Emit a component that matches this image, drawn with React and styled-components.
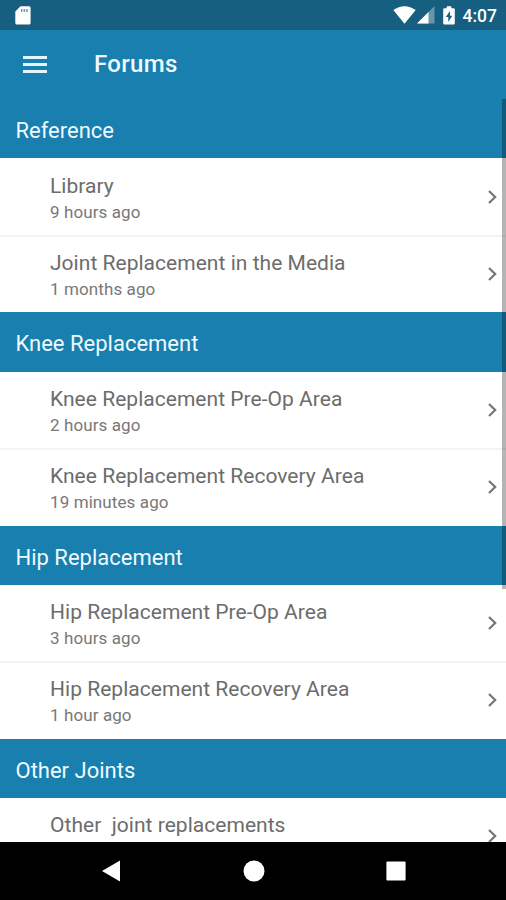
import React from 'react'
import styled, { createGlobalStyle } from 'styled-components'

const COLORS = {
  BLUE: '#187fae',
  DARK_BLUE: '#165f80',
  TITLE: '#6c6c6c',
  TIME: '#787878',
  LINE: '#f3f3f3',
}

const SECTIONS = [
  {
    name: 'Reference',
    forums: [
      { title: 'Library', time: '9 hours ago' },
      { title: 'Joint Replacement in the Media', time: '1 months ago' },
    ],
  },
  {
    name: 'Knee Replacement',
    forums: [
      { title: 'Knee Replacement Pre-Op Area', time: '2 hours ago' },
      { title: 'Knee Replacement Recovery Area', time: '19 minutes ago' },
    ],
  },
  {
    name: 'Hip Replacement',
    forums: [
      { title: 'Hip Replacement Pre-Op Area', time: '3 hours ago' },
      { title: 'Hip Replacement Recovery Area', time: '1 hour ago' },
    ],
  },
  {
    name: 'Other Joints',
    forums: [{ title: 'Other  joint replacements', time: '' }],
  },
]

const GlobalStyle = createGlobalStyle`
  body {
    margin: 0;
    background: black;
    font-family: Roboto, sans-serif;
  }
`

const Screen = styled.div`
  display: flex;
  flex-direction: column;
  width: 506px;
  height: 900px;
  overflow: hidden;
  background: white;
`

const StatusBar = styled.div`
  display: flex;
  flex: none;
  align-items: center;
  justify-content: space-between;
  box-sizing: border-box;
  height: 30px;
  padding: 0 9px 0 15px;
  background: ${COLORS.DARK_BLUE};
`

const StatusIcons = styled.div`
  display: flex;
  align-items: center;
`

const Clock = styled.span`
  margin-left: 8px;
  color: white;
  font-size: 17.5px;
  font-weight: 500;
  line-height: 30px;
  height: 28px;
`

const Toolbar = styled.div`
  display: flex;
  flex: none;
  align-items: center;
  gap: 47px;
  box-sizing: border-box;
  height: 69px;
  padding: 0 23px;
  background: ${COLORS.BLUE};
`

const MenuButton = styled.div`
  display: flex;
  flex-direction: column;
  gap: 4px;
  width: 24px;
`

const MenuLine = styled.div`
  height: 3px;
  background: #e3f5ff;
`

const PageTitle = styled.div`
  padding-bottom: 2px;
  color: #eefaff;
  font-size: 24px;
  font-weight: 500;
  letter-spacing: 0.35px;
`

const Content = styled.div`
  position: relative;
  flex: 1;
  min-height: 0;
  overflow: hidden;
`

const Scrollbar = styled.div`
  position: absolute;
  top: 0;
  right: 0;
  width: 4.5px;
  height: 490px;
  background: rgba(0, 0, 0, 0.29);
`

const SectionHeader = styled.div`
  box-sizing: border-box;
  height: 59.3px;
  padding-left: 15.5px;
  background: ${COLORS.BLUE};
  color: #eefaff;
  font-size: 22px;
  line-height: 63px;
`

const Row = styled.div`
  display: flex;
  align-items: center;
  justify-content: space-between;
  box-sizing: border-box;
  height: ${({ $last }) => ($last ? '75.5px' : '78.5px')};
  padding: 0 8px ${({ $last }) => ($last ? '2px' : '0')} 50px;
  border-bottom: ${({ $last }) => ($last ? 'none' : `2px solid ${COLORS.LINE}`)};
`

const RowText = styled.div`
  display: flex;
  flex-direction: column;
  padding-top: 3px;
`

const ForumTitle = styled.div`
  color: ${COLORS.TITLE};
  font-size: 21px;
  line-height: 27px;
  letter-spacing: 0.03px;
  white-space: pre;
`

const ForumTime = styled.div`
  height: 24px;
  color: ${COLORS.TIME};
  font-size: 17px;
  line-height: 24px;
  letter-spacing: 0.1px;
`

const NavBar = styled.div`
  display: flex;
  flex: none;
  align-items: center;
  justify-content: space-between;
  box-sizing: border-box;
  height: 58px;
  padding: 0 100px 0 101px;
  background: black;
`

const SdCardIcon = () => (
  <svg width="16" height="19" viewBox="0 0 16 19">
    <path d="M5.5 0.3H14a1.6 1.6 0 0 1 1.6 1.6V17a1.6 1.6 0 0 1-1.6 1.6H1.9A1.6 1.6 0 0 1 .3 17V5.5z" fill="white" />
    <path d="M6 3h1.5v3H6zM8.6 3h1.5v3H8.6zM11.2 3h1.5v3h-1.5z" fill="#6f9bae" />
  </svg>
)

const WifiIcon = () => (
  <svg width="23" height="18" viewBox="0 0 23 18">
    <path d="M0.3 4Q11.5-3.6 22.7 4L11.5 17.8z" fill="white" />
  </svg>
)

const SignalIcon = styled.svg`
  margin: 0 8px 0 1px;
`

const BatteryIcon = () => (
  <svg width="12" height="19" viewBox="0 0 12 19">
    <path d="M3.7.3h4.6v1.9h2.2Q11.8 2.2 11.8 3.5v13.7q0 1.3-1.3 1.3h-9Q.2 18.5.2 17.2V3.5Q.2 2.2 1.5 2.2h2.2z" fill="white" />
    <path d="M7 5L2.8 11h2.5v5l4-6.2H7z" fill={COLORS.DARK_BLUE} />
  </svg>
)

const Chevron = () => (
  <svg width="11" height="16" viewBox="0 0 11 16" fill="none">
    <path d="M2 2L8.2 8L2 14" stroke="#757575" strokeWidth="2.2" />
  </svg>
)

const Section = ({ section }) => (
  <>
    <SectionHeader>{section.name}</SectionHeader>
    {section.forums.map((forum, i) => (
      <Row key={forum.title} $last={i > 0}>
        <RowText>
          <ForumTitle>{forum.title}</ForumTitle>
          <ForumTime>{forum.time}</ForumTime>
        </RowText>
        <Chevron />
      </Row>
    ))}
  </>
)

const App = () => (
  <Screen>
    <GlobalStyle />
    <StatusBar>
      <SdCardIcon />
      <StatusIcons>
        <WifiIcon />
        <SignalIcon width="18" height="18" viewBox="0 0 18 18">
          <path d="M17.5 0v17.5H0z" fill="white" opacity="0.35" />
          <path d="M11.5 6v11.5H0z" fill="white" />
        </SignalIcon>
        <BatteryIcon />
        <Clock>4:07</Clock>
      </StatusIcons>
    </StatusBar>
    <Toolbar>
      <MenuButton>
        <MenuLine />
        <MenuLine />
        <MenuLine />
      </MenuButton>
      <PageTitle>Forums</PageTitle>
    </Toolbar>
    <Content>
      {SECTIONS.map(section => (
        <Section key={section.name} section={section} />
      ))}
      <Scrollbar />
    </Content>
    <NavBar>
      <svg width="20" height="22" viewBox="0 0 20 22">
        <path d="M19 0.5v21L1 11z" fill="white" />
      </svg>
      <svg width="22" height="22" viewBox="0 0 22 22">
        <circle cx="11" cy="11" r="10.5" fill="white" />
      </svg>
      <svg width="20" height="20" viewBox="0 0 20 20">
        <rect x="0.4" y="0.4" width="19.2" height="19.2" rx="1" fill="white" />
      </svg>
    </NavBar>
  </Screen>
)

export default App
